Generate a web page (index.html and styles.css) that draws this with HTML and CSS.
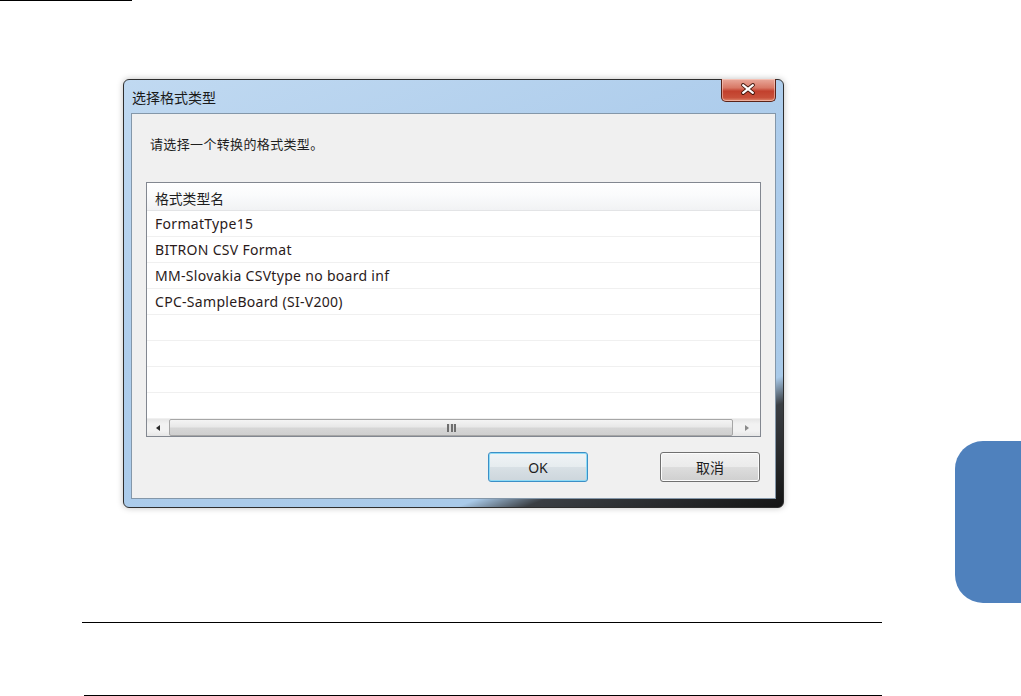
FILE: index.html
```html
<!DOCTYPE html>
<html lang="zh-CN">
<head>
    <meta charset="UTF-8">
    <meta name="viewport" content="width=device-width, initial-scale=1.0">
    <link rel="stylesheet" href="styles.css">
    <title>选择格式类型</title>
</head>
<body>
    <div class="top-rule"></div>

    <div class="window">
        <div class="titlebar">
            <span class="title">选择格式类型</span>
            <button class="close" type="button" aria-label="关闭">
                <svg width="55" height="23" viewBox="0 0 55 23">
                    <path d="M22.5 7 L32.5 15 M32.5 7 L22.5 15" stroke="#3d1208" stroke-width="4" stroke-linecap="round" fill="none"/>
                    <path d="M22.5 7 L32.5 15 M32.5 7 L22.5 15" stroke="#ffffff" stroke-width="2.2" stroke-linecap="round" fill="none"/>
                </svg>
            </button>
        </div>
        <div class="client">
            <p class="prompt">请选择一个转换的格式类型。</p>
            <div class="listbox">
                <div class="list-head">格式类型名</div>
                <ul class="rows">
                    <li>FormatType15</li>
                    <li>BITRON CSV Format</li>
                    <li>MM-Slovakia CSVtype no board inf</li>
                    <li>CPC-SampleBoard (SI-V200)</li>
                    <li></li>
                    <li></li>
                    <li></li>
                    <li></li>
                </ul>
                <div class="hscroll">
                    <span class="arrow"><span class="tri tri-left"></span></span>
                    <div class="bar"><span class="grip"></span></div>
                    <span class="arrow arrow-right"><span class="tri tri-right"></span></span>
                </div>
            </div>
            <div class="buttons">
                <button class="btn btn-default" type="button">OK</button>
                <button class="btn" type="button">取消</button>
            </div>
        </div>
    </div>

    <div class="rule rule-a"></div>
    <div class="rule rule-b"></div>

    <div class="side-tab"></div>
</body>
</html>
```

FILE: styles.css
```css
body {
    margin: 0;
    width: 1021px;
    height: 696px;
    background: #fff;
    font-family: "Noto Sans", "Noto Sans CJK SC", sans-serif;
    font-size: 13px;
    color: #1e1e1e;
    position: relative;
    overflow: hidden;
}

.top-rule {
    width: 132px;
    height: 1px;
    background: #000;
}

/* dialog window */
.window {
    box-sizing: border-box;
    width: 661px;
    height: 429px;
    margin: 78px 0 0 123px;
    border: 1px solid #2e2e2e;
    border-radius: 6px;
    background: linear-gradient(158deg, #c0d9f1 0%, #aecdec 40%, #a9cae9 81%, #3b3f44 85%, #141414 100%);
    box-shadow: 0 0 6px rgba(0, 0, 0, 0.25);
    display: flex;
    flex-direction: column;
}
.titlebar {
    height: 33px;
    display: flex;
    align-items: flex-start;
}
.title {
    align-self: center;
    padding-left: 8px;
    font-family: "Noto Sans CJK SC", sans-serif;
    font-size: 14px;
    color: #1a1a1a;
}
.close {
    margin: -1px 7px 0 auto;
    width: 55px;
    height: 23px;
    padding: 0;
    border: 1px solid #5a2319;
    border-top: none;
    border-radius: 0 0 5px 5px;
    background: linear-gradient(#e9a99b 0%, #d87866 40%, #c2402d 55%, #c8503a 85%, #e08a70 100%);
    box-shadow: inset 0 0 0 1px rgba(255, 220, 210, 0.5);
    display: flex;
}
.close svg { display: block; margin: -1px 0 0 -1px; }

.client {
    box-sizing: border-box;
    width: 645px;
    height: 386px;
    margin-left: 7px;
    border: 1px solid #8497a9;
    background: #f0f0f0;
    display: flex;
    flex-direction: column;
}
.prompt {
    margin: 0;
    padding: 21px 0 0 18px;
    line-height: 18px;
    letter-spacing: 0.35px;
    font-family: "Noto Sans CJK SC", sans-serif;
}

/* list view */
.listbox {
    box-sizing: border-box;
    width: 615px;
    height: 255px;
    margin: 29px 0 0 14px;
    border: 1px solid #828790;
    background: #fff;
    display: flex;
    flex-direction: column;
}
.list-head {
    box-sizing: border-box;
    height: 28px;
    padding: 3px 0 0 8px;
    line-height: 24px;
    border-bottom: 1px solid #e3e4e6;
    background: linear-gradient(#ffffff 0%, #fafbfc 45%, #f1f2f4 100%);
    font-family: "Noto Sans CJK SC", sans-serif;
    font-size: 13.8px;
}
.rows {
    list-style: none;
    margin: 0;
    padding: 0;
    flex: 1;
}
.rows li {
    box-sizing: border-box;
    height: 26px;
    padding-left: 8px;
    line-height: 26px;
    border-bottom: 1px solid #f0f0f0;
    color: #2a1a1a;
    font-size: 14px;
    letter-spacing: 0.3px;
}
.hscroll {
    height: 17px;
    display: flex;
    background: linear-gradient(#e6e6e6, #f2f2f2 30%, #f2f2f2 70%, #e6e6e6);
}
.arrow {
    width: 21px;
    display: flex;
    align-items: center;
    justify-content: center;
}
.arrow-right { width: 27px; }
.tri {
    width: 0;
    height: 0;
    border-top: 3.5px solid transparent;
    border-bottom: 3.5px solid transparent;
}
.tri-left { border-right: 4px solid #2a2a2a; }
.tri-right { border-left: 4px solid #8a8a8a; }
.bar {
    flex: 1;
    margin: 0 0 0 1px;
    box-sizing: border-box;
    border: 1px solid #a6a6a6;
    border-radius: 2px;
    background: linear-gradient(#f4f4f4 0%, #e8e8e8 45%, #d6d6d6 55%, #cfcfcf 100%);
    display: flex;
    align-items: center;
    justify-content: center;
}
.grip {
    width: 9px;
    height: 8px;
    background: repeating-linear-gradient(90deg, #6e6e6e 0 2px, #d8d8d8 2px 3.5px);
}

/* buttons */
.buttons {
    display: flex;
    justify-content: flex-end;
    gap: 72px;
    margin-top: 15px;
    padding-right: 15px;
}
.btn {
    box-sizing: border-box;
    width: 100px;
    height: 30px;
    padding: 0;
    border: 1px solid #707070;
    border-radius: 3px;
    background: linear-gradient(#f2f2f2 0%, #ebebeb 49%, #dddddd 51%, #cfcfcf 100%);
    box-shadow: inset 0 0 0 1px #fcfcfc;
    font-family: "Noto Sans", "Noto Sans CJK SC", sans-serif;
    font-size: 14px;
    color: #1e1e1e;
}
.btn-default {
    border-color: #3c8fc6;
    box-shadow: inset 0 0 0 1px #8edbf6;
    background: linear-gradient(#f0f4f6 0%, #e6ecef 49%, #d8e0e5 51%, #cdd6dc 100%);
}

/* page rules */
.rule {
    width: 800px;
    height: 1px;
    background: #000;
    margin-left: 82px;
}
.rule-a { margin-top: 114px; }
.rule-b { margin-top: 72px; margin-left: 84px; width: 798px; }

.side-tab {
    position: absolute;
    right: 0;
    top: 441px;
    width: 66px;
    height: 162px;
    background: #4f81bd;
    border-radius: 28px 0 0 28px;
}
```
